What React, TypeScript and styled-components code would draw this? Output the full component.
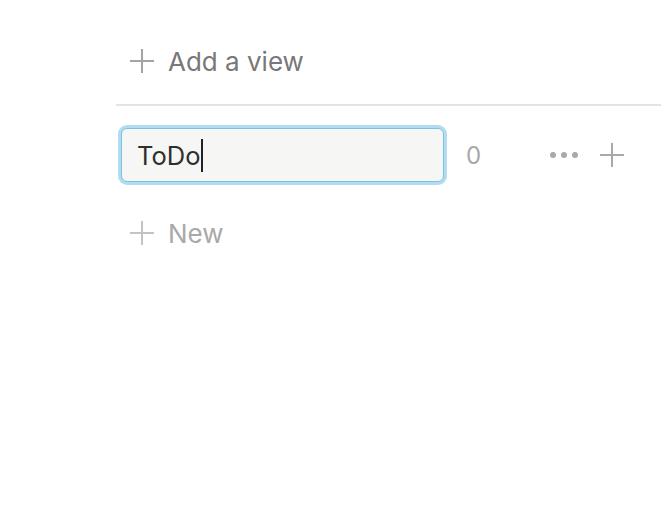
import React from "react";
import styled, { createGlobalStyle } from "styled-components";

const Global = createGlobalStyle`
  html, body { margin: 0; padding: 0; background: #ffffff; }
  body { font-family: Inter, "Noto Sans", "Liberation Sans", sans-serif; -webkit-font-smoothing: antialiased; }
`;

const Page = styled.div`
  padding-left: 116px;
  width: 545px;
`;

const ViewBar = styled.div`
  height: 106px;
  display: flex;
  align-items: center;
  padding-left: 14px;
  padding-top: 18px;
  box-sizing: border-box;
  border-bottom: 2px solid #e3e3e1;
`;

const ActionButton = styled.div<{ $muted?: boolean }>`
  display: flex;
  align-items: center;
  gap: 14px;
  font-size: 26px;
  color: ${(p) => (p.$muted ? "#a9a9a9" : "#787878")};
`;

const GroupRow = styled.div`
  display: flex;
  align-items: center;
  margin-top: 22px;
  padding-left: 5px;
  height: 54px;
`;

const TitleInput = styled.div`
  width: 323px;
  height: 54px;
  box-sizing: border-box;
  border: 1.5px solid #78c3e4;
  box-shadow: 0 0 0 3px #b2ddf1;
  border-radius: 6px;
  background: #f6f6f4;
  display: flex;
  align-items: center;
  padding-left: 15px;
  font-size: 25.5px;
  color: #2f2f2d;
`;

const Caret = styled.span`
  display: inline-block;
  width: 2px;
  height: 33px;
  background: #222;
  margin-left: 1px;
`;

const Count = styled.span`
  margin-left: 22px;
  font-size: 24px;
  color: #a8a8a6;
  width: 83px;
`;

const Tools = styled.div`
  display: flex;
  align-items: center;
  gap: 21px;
`;

const NewRow = styled.div`
  margin-top: 27px;
  padding-left: 14px;
  height: 48px;
  display: flex;
  align-items: center;
`;

const Plus = ({ color = "#a9a9a7" }: { color?: string }) => (
  <svg width="24" height="24" viewBox="0 0 24 24">
    <path d="M12 0v24M0 12h24" stroke={color} strokeWidth="2" fill="none" />
  </svg>
);

const Dots = () => (
  <svg width="30" height="8" viewBox="0 0 30 8">
    <circle cx="4" cy="4" r="3" fill="#a9a9a7" />
    <circle cx="15" cy="4" r="3" fill="#a9a9a7" />
    <circle cx="26" cy="4" r="3" fill="#a9a9a7" />
  </svg>
);

export default function App() {
  return (
    <>
      <Global />
      <Page>
        <ViewBar>
          <ActionButton>
            <Plus color="#a3a3a3" />
            Add a view
          </ActionButton>
        </ViewBar>
        <GroupRow>
          <TitleInput>
            ToDo
            <Caret />
          </TitleInput>
          <Count>0</Count>
          <Tools>
            <Dots />
            <Plus color="#a9a9a7" />
          </Tools>
        </GroupRow>
        <NewRow>
          <ActionButton $muted>
            <Plus color="#c3c3c3" />
            New
          </ActionButton>
        </NewRow>
      </Page>
    </>
  );
}
